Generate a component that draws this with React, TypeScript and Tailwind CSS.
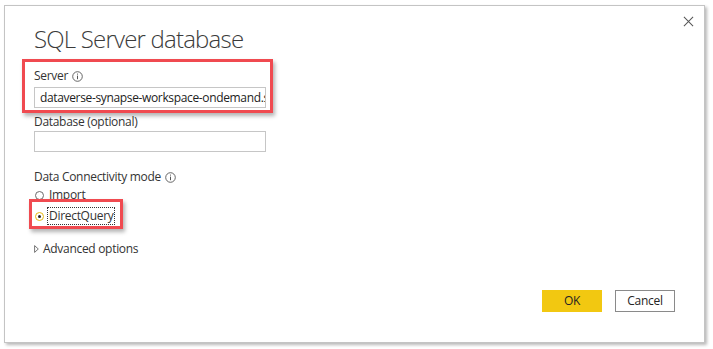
import React from 'react';

const font = { fontFamily: '"Open Sans", "Noto Sans", sans-serif' };

function InfoIcon() {
  return (
    <svg className="w-[11px] h-[11px] ml-[4px] shrink-0" viewBox="0 0 11 11" fill="none">
      <circle cx="5.5" cy="5.5" r="4.8" stroke="#555" strokeWidth="0.9" />
      <rect x="5" y="4.6" width="1" height="3.6" fill="#555" />
      <rect x="5" y="2.6" width="1" height="1" fill="#555" />
    </svg>
  );
}

export default function App() {
  return (
    <div className="w-[713px] h-[349px] bg-white pl-[4px] pt-[5px]" style={font}>
      {/* Dialog */}
      <div className="relative w-[701px] h-[338px] bg-white border border-[#c4c4c4] shadow-[2px_2px_3px_rgba(0,0,0,0.28)] pl-[29px] text-[#333] text-[12px] leading-[16px] tracking-[-0.3px]">
        {/* close */}
        <button className="absolute right-[10px] top-[9px] w-[12px] h-[12px] flex items-center justify-center">
          <svg viewBox="0 0 12 12" className="w-[11px] h-[11px]" stroke="#555" strokeWidth="1.1">
            <path d="M1 1 L11 11 M11 1 L1 11" />
          </svg>
        </button>

        <h1 className="pt-[17px] text-[24px] leading-[32px] font-light text-[#3b3b3b] tracking-[-0.8px]">SQL Server database</h1>

        <div className="mt-[13px] flex items-center h-[16px]">
          <span>Server</span>
          <InfoIcon />
        </div>
        <div className="mt-[3px] w-[232px] h-[21px] border border-[#c6c6c6] overflow-hidden whitespace-nowrap pl-[5px] text-[12px] leading-[19px] text-[#222] tracking-[-0.35px]">
          dataverse-synapse-workspace-ondemand.sql.azuresynapse.net
        </div>

        <div className="mt-[6px] h-[16px]">Database (optional)</div>
        <div className="mt-[1px] w-[232px] h-[21px] border border-[#c6c6c6]" />

        <div className="mt-[17px] flex items-center h-[16px]">
          <span>Data Connectivity mode</span>
          <InfoIcon />
        </div>
        <div className="mt-[2px] flex items-center h-[16px]">
          <span className="w-[9px] h-[9px] rounded-full border border-[#6b6b6b] ml-[1px] mr-[5px]" />
          <span>Import</span>
        </div>
        <div className="mt-[5px] flex items-center h-[16px]">
          <span className="w-[9px] h-[9px] rounded-full border-[1.5px] border-[#e8b90c] ml-[1px] mr-[4px] flex items-center justify-center">
            <span className="w-[3px] h-[3px] rounded-full bg-[#222]" />
          </span>
          <span className="outline outline-1 outline-dotted outline-[#333] px-[1px] leading-[16px]">DirectQuery</span>
        </div>

        <div className="mt-[17px] flex items-center h-[16px]">
          <svg viewBox="0 0 5 8" className="w-[5px] h-[8px] mr-[4px]" fill="none" stroke="#666" strokeWidth="0.9">
            <path d="M0.6 0.6 L4.3 4 L0.6 7.4 Z" />
          </svg>
          <span>Advanced options</span>
        </div>

        {/* buttons */}
        <div className="absolute right-[29px] bottom-[30px] flex gap-[13px]">
          <button className="w-[60px] h-[22px] bg-[#f2c811] text-[#252423] text-[12px]">OK</button>
          <button className="w-[60px] h-[22px] border border-[#8a8a8a] bg-white text-[#252423] text-[12px]">Cancel</button>
        </div>

        {/* highlight boxes */}
        <div className="absolute left-[17px] top-[53px] w-[251px] h-[54px] border-[3px] border-[#f04a50] shadow-[2px_3px_4px_rgba(0,0,0,0.3)] pointer-events-none" />
        <div className="absolute left-[24px] top-[193px] w-[94px] h-[30px] border-[3px] border-[#f04a50] shadow-[2px_3px_4px_rgba(0,0,0,0.3)] pointer-events-none" />
      </div>
    </div>
  );
}
